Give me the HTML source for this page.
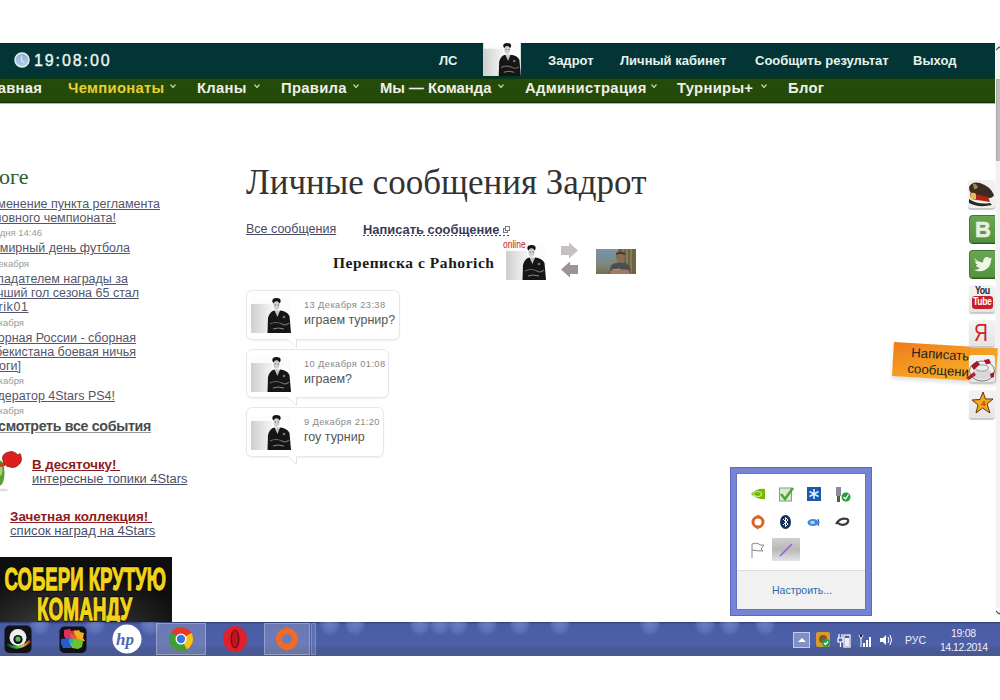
<!DOCTYPE html>
<html><head><meta charset="utf-8">
<style>
*{margin:0;padding:0;box-sizing:border-box}
html,body{width:1000px;height:700px;overflow:hidden;background:#fff;font-family:"Liberation Sans",sans-serif;position:relative}
.a{position:absolute;white-space:pre}
#top{position:absolute;left:0;top:43px;width:995px;height:36px;background:linear-gradient(#02282a 0,#033436 1px,#033436 32px,#063424 33px,#0a381c 35px,#0a381c 36px)}
#nav{position:absolute;left:0;top:79px;width:995px;height:25px;background:linear-gradient(#1e4a1a 0,#254a0a 1px,#244a08 22px,#1e3208 23px,#1e3208 24px,#a8b898 24px)}
.hn{color:#e6f2ec;font-weight:bold;font-size:13px;top:52.5px}
.gn{color:#f0f0e8;font-weight:bold;font-size:14.8px;top:80px;letter-spacing:0.3px}
.ar{position:absolute;top:84px;width:6px;height:4px}
#sb{position:absolute;left:995px;top:43px;width:5px;height:565px;background:#f2f2f2;border-left:1px solid #f8f8f8}
#thumb{position:absolute;left:996px;top:79px;width:4px;height:82px;background:#bdbdbd;border-left:1px solid #a8a8a8}
.sl{color:#555569;font-size:12.5px;text-decoration:underline;text-align:right;line-height:14px}
.sd{color:#9a9a9a;font-size:9.5px;text-align:right;line-height:12px}
#tb{position:absolute;left:0;top:622px;width:1000px;height:34px;background:radial-gradient(ellipse 11px 13px at 40px 1px,rgba(140,160,220,0.5) 0%,rgba(140,160,220,0.3) 65%,rgba(140,160,220,0) 100%),radial-gradient(ellipse 11px 13px at 95px 1px,rgba(140,160,220,0.5) 0%,rgba(140,160,220,0.3) 65%,rgba(140,160,220,0) 100%),radial-gradient(ellipse 11px 13px at 150px 1px,rgba(140,160,220,0.5) 0%,rgba(140,160,220,0.3) 65%,rgba(140,160,220,0) 100%),radial-gradient(ellipse 11px 13px at 330px 1px,rgba(140,160,220,0.5) 0%,rgba(140,160,220,0.3) 65%,rgba(140,160,220,0) 100%),radial-gradient(ellipse 11px 13px at 355px 1px,rgba(140,160,220,0.5) 0%,rgba(140,160,220,0.3) 65%,rgba(140,160,220,0) 100%),radial-gradient(ellipse 11px 13px at 420px 1px,rgba(140,160,220,0.5) 0%,rgba(140,160,220,0.3) 65%,rgba(140,160,220,0) 100%),radial-gradient(ellipse 11px 13px at 440px 1px,rgba(140,160,220,0.5) 0%,rgba(140,160,220,0.3) 65%,rgba(140,160,220,0) 100%),radial-gradient(ellipse 11px 13px at 458px 1px,rgba(140,160,220,0.5) 0%,rgba(140,160,220,0.3) 65%,rgba(140,160,220,0) 100%),radial-gradient(ellipse 11px 13px at 487px 1px,rgba(140,160,220,0.5) 0%,rgba(140,160,220,0.3) 65%,rgba(140,160,220,0) 100%),radial-gradient(ellipse 11px 13px at 520px 1px,rgba(140,160,220,0.5) 0%,rgba(140,160,220,0.3) 65%,rgba(140,160,220,0) 100%),radial-gradient(ellipse 11px 13px at 560px 1px,rgba(140,160,220,0.5) 0%,rgba(140,160,220,0.3) 65%,rgba(140,160,220,0) 100%),radial-gradient(ellipse 11px 13px at 650px 1px,rgba(140,160,220,0.5) 0%,rgba(140,160,220,0.3) 65%,rgba(140,160,220,0) 100%),radial-gradient(ellipse 11px 13px at 705px 1px,rgba(140,160,220,0.5) 0%,rgba(140,160,220,0.3) 65%,rgba(140,160,220,0) 100%),radial-gradient(ellipse 11px 13px at 730px 1px,rgba(140,160,220,0.5) 0%,rgba(140,160,220,0.3) 65%,rgba(140,160,220,0) 100%),radial-gradient(ellipse 11px 13px at 765px 1px,rgba(140,160,220,0.5) 0%,rgba(140,160,220,0.3) 65%,rgba(140,160,220,0) 100%),linear-gradient(#2e3a70 0,#3c4a8c 1px,#4a5ca4 2px,#4d60a8 22px,#4a5a98 26px,#485890 34px)}
</style></head><body>
<svg width="0" height="0" style="position:absolute">
<defs>
<linearGradient id="avbg" x1="0" y1="0" x2="1" y2="0"><stop offset="0" stop-color="#cfcfcf"/><stop offset="1" stop-color="#f4f4f4"/></linearGradient>
<symbol id="av" viewBox="0 0 40 35">
<rect x="0" y="0" width="40" height="35" fill="#fcfcfc"/>
<rect x="0" y="6" width="21" height="29" fill="url(#avbg)"/>
<ellipse cx="25.5" cy="3" rx="4.2" ry="3" fill="#151515"/>
<ellipse cx="25.5" cy="7.5" rx="3" ry="4.3" fill="#d0d0d0"/>
<path d="M23.5 7 H25 M26.5 7 H28" stroke="#555" stroke-width="0.8"/>
<path d="M16.5 35 L17 20 Q18.5 13.5 23.5 12.5 L27 15 L29 12.5 Q36 13 38.5 18 L40 35 Z" fill="#151515"/>
<path d="M23.5 12.5 L26.5 19 L29 12.5 Z" fill="#c4c4c4"/>
<path d="M19 26 Q25 23 31 26 Q35 28 38 25" stroke="#6a6a6a" stroke-width="1.2" fill="none"/>
<path d="M22 31 Q27 29 33 31" stroke="#8a8a8a" stroke-width="1" fill="none"/>
<circle cx="33" cy="19" r="1.3" fill="#777"/>
</symbol>
</defs>
</svg>
<div id="top"></div>
<div id="nav"></div>
<div id="sb"></div><div id="thumb"></div>
<svg class="a" style="left:996px;top:46px" width="4" height="5"><path d="M0 4 L3 1 L4 2" stroke="#555" stroke-width="1.2" fill="none"/></svg>
<svg class="a" style="left:996px;top:610px" width="4" height="5"><path d="M0 1 L3 4 L4 3" stroke="#555" stroke-width="1.2" fill="none"/></svg>

<!-- header -->
<svg class="a" style="left:14px;top:52px" width="16" height="16" viewBox="0 0 16 16"><defs><linearGradient id="clk" x1="0" y1="0" x2="0" y2="1"><stop offset="0" stop-color="#8eaad0"/><stop offset="1" stop-color="#b4d0ee"/></linearGradient></defs><circle cx="8" cy="8" r="7" fill="url(#clk)" stroke="#dff2f0" stroke-width="1.5"/><path d="M7.5 3.5 V8.5 L10.5 11" stroke="#d4e8f8" stroke-width="1.3" fill="none"/></svg>
<div class="a" style="left:34px;top:51.5px;color:#f0f6f0;font-size:16px;letter-spacing:1.9px;-webkit-text-stroke:0.35px #f0f6f0">19:08:00</div>
<div class="a hn" style="left:439px">ЛС</div>
<svg class="a" style="left:482px;top:43px" width="40" height="33" viewBox="0 0 40 33" preserveAspectRatio="none"><use href="#av" width="40" height="33"/></svg>
<div class="a hn" style="left:548px">Задрот</div>
<div class="a hn" style="left:620px">Личный кабинет</div>
<div class="a hn" style="left:755px">Сообщить результат</div>
<div class="a hn" style="left:913px">Выход</div>

<!-- green nav -->
<div class="a gn" style="left:-20px">Главная</div>
<div class="a gn" style="left:68px;color:#e8d030">Чемпионаты</div>
<div class="a gn" style="left:197px">Кланы</div>
<div class="a gn" style="left:281px">Правила</div>
<div class="a gn" style="left:380px;letter-spacing:0">Мы — Команда</div>
<div class="a gn" style="left:525px">Администрация</div>
<div class="a gn" style="left:677px">Турниры+</div>
<div class="a gn" style="left:788px">Блог</div>
<svg class="ar" style="left:170px"><path d="M0.5 0.5 L3 3.5 L5.5 0.5" stroke="#b4d098" stroke-width="1.3" fill="none"/></svg>
<svg class="ar" style="left:254px"><path d="M0.5 0.5 L3 3.5 L5.5 0.5" stroke="#b4d098" stroke-width="1.3" fill="none"/></svg>
<svg class="ar" style="left:353px"><path d="M0.5 0.5 L3 3.5 L5.5 0.5" stroke="#b4d098" stroke-width="1.3" fill="none"/></svg>
<svg class="ar" style="left:498px"><path d="M0.5 0.5 L3 3.5 L5.5 0.5" stroke="#b4d098" stroke-width="1.3" fill="none"/></svg>
<svg class="ar" style="left:651px"><path d="M0.5 0.5 L3 3.5 L5.5 0.5" stroke="#b4d098" stroke-width="1.3" fill="none"/></svg>
<svg class="ar" style="left:761px"><path d="M0.5 0.5 L3 3.5 L5.5 0.5" stroke="#b4d098" stroke-width="1.3" fill="none"/></svg>

<!-- sidebar -->
<div class="a" style="right:971.5px;top:163.5px;font-family:'Liberation Serif',serif;font-size:22px;color:#2a5c30">в блоге</div>
<div class="a sl" style="right:840px;top:197px">Изменение пункта регламента</div>
<div class="a sl" style="right:884px;top:211px">основного чемпионата!</div>
<div class="a sd" style="right:958px;top:227px">Сегодня 14:46</div>
<div class="a sl" style="right:870px;top:241px">Всемирный день футбола</div>
<div class="a sd" style="right:971px;top:258px">10 декабря</div>
<div class="a sl" style="right:872px;top:272px">Обладателем награды за</div>
<div class="a sl" style="right:861px;top:286px">лучший гол сезона 65 стал</div>
<div class="a sl" style="right:971.5px;top:300px;letter-spacing:0.6px">rik01</div>
<div class="a sd" style="right:976px;top:316.5px">10 декабря</div>
<div class="a sl" style="right:864px;top:331px">Сборная России - сборная</div>
<div class="a sl" style="right:864px;top:345px">Узбекистана боевая ничья</div>
<div class="a sl" style="right:979px;top:359px">[итоги]</div>
<div class="a sd" style="right:976px;top:375px">10 декабря</div>
<div class="a sl" style="right:885px;top:389px">Модератор 4Stars PS4!</div>
<div class="a sd" style="right:976px;top:405px">10 декабря</div>
<div class="a" style="right:849px;top:417.5px;font-size:14.2px;letter-spacing:-0.3px;font-weight:bold;color:#4a4a4a;text-decoration:underline;text-decoration-color:#999">Посмотреть все события</div>

<!-- rose -->
<svg class="a" style="left:0;top:445px" width="26" height="50" viewBox="0 0 26 50">
<ellipse cx="0" cy="28" rx="4.5" ry="12.5" fill="#5aa030"/>
<ellipse cx="0" cy="25" rx="2.5" ry="6" fill="#a8d070"/>
<ellipse cx="3" cy="45" rx="5" ry="1.5" fill="#e0e0e0"/>
<path d="M0 18 L5 18 L5 21 L0 22 Z" fill="#c04020"/>
<path d="M2.5 13 Q3 8 9 7 L12 6.5 Q15 7 18 10 L20 8.5 L21 11 Q22.5 16 19.5 19 Q16 23 12 22.5 Q6 22 3.5 18 Z" fill="#dc2020" stroke="#9a1818" stroke-width="0.8"/>
</svg>
<div class="a" style="left:32px;top:457px;font-size:13.3px;font-weight:bold;color:#8e1c1c;text-decoration:underline">В десяточку! </div>
<div class="a" style="left:32px;top:471px;font-size:12.85px;color:#4a5068;text-decoration:underline">интересные топики 4Stars</div>
<div class="a" style="left:10px;top:509px;font-size:13.4px;font-weight:bold;color:#8e1c1c;text-decoration:underline">Зачетная коллекция! </div>
<div class="a" style="left:10px;top:523px;font-size:13.1px;color:#4a5068;text-decoration:underline">список наград на 4Stars</div>

<!-- banner -->
<div class="a" style="left:0;top:557px;width:172px;height:65px;background:radial-gradient(ellipse 120px 60px at 70px 75px,#4a4a4a 0%,#2a2a2a 50%,#0e0e0e 100%);overflow:hidden">
<svg class="a" style="left:0;top:0" width="172" height="65" viewBox="0 0 172 65">
<g font-family="Liberation Sans" font-weight="bold" font-size="32" stroke-linejoin="miter">
<text x="0" y="0" transform="translate(4.5,32.5) scale(0.582,1)" fill="#000" stroke="#000" stroke-width="3">СОБЕРИ КРУТУЮ</text>
<text x="0" y="0" transform="translate(4.5,32.5) scale(0.582,1)" fill="#f2d41a" stroke="#f2d41a" stroke-width="1.3">СОБЕРИ КРУТУЮ</text>
<text x="0" y="0" transform="translate(37,63) scale(0.593,1)" fill="#000" stroke="#000" stroke-width="3">КОМАНДУ</text>
<text x="0" y="0" transform="translate(37,63) scale(0.593,1)" fill="#f2d41a" stroke="#f2d41a" stroke-width="1.3">КОМАНДУ</text>
</g>
</svg>
</div>

<!-- main -->
<div class="a" style="left:246px;top:163px;font-family:'Liberation Serif',serif;font-size:35px;color:#333">Личные сообщения Задрот</div>
<div class="a" style="left:246px;top:222px;font-size:12.5px;color:#4a4a62;text-decoration:underline">Все сообщения</div>
<div class="a" style="left:363px;top:222px;font-size:12.9px;font-weight:bold;color:#3a3a58">Написать сообщение</div>
<div class="a" style="left:363px;top:235px;width:147px;height:1px;background:repeating-linear-gradient(90deg,#444 0 2px,transparent 2px 4px)"></div>
<svg class="a" style="left:503px;top:226px" width="7" height="7"><rect x="0.5" y="2.5" width="4" height="4" fill="none" stroke="#777"/><rect x="2.5" y="0.5" width="4" height="4" fill="#fff" stroke="#777"/></svg>
<div class="a" style="left:333px;top:254px;font-family:'Liberation Serif',serif;font-size:15.5px;font-weight:bold;color:#1a1a1a;letter-spacing:0.55px">Переписка с Pahorich</div>
<svg class="a" style="left:506px;top:245px" width="40" height="35"><use href="#av" width="40" height="35"/></svg>
<div class="a" style="left:503px;top:239px;font-size:10px;color:#c82020;transform:scaleX(0.85);transform-origin:0 0">online</div>
<svg class="a" style="left:560px;top:242px" width="19" height="37" viewBox="0 0 19 37">
<path d="M1 4 L9 4 L9 0.5 L18 8.5 L9 16.5 L9 13 L1 13 Z" fill="#c4c0c4"/>
<path d="M18 23 L10 23 L10 19.5 L1 27.5 L10 35.5 L10 32 L18 32 Z" fill="#9c9498"/>
</svg>
<svg class="a" style="left:596px;top:249px" width="40" height="25" viewBox="0 0 40 25">
<defs><linearGradient id="phl" x1="0" y1="0" x2="0" y2="1"><stop offset="0" stop-color="#7a92ac"/><stop offset="0.6" stop-color="#7c8a80"/><stop offset="1" stop-color="#76704a"/></linearGradient></defs>
<rect width="40" height="25" fill="url(#phl)"/>
<rect x="22" width="18" height="25" fill="#6e6444"/>
<path d="M27 0 V25 M31 0 V25 M35 0 V25" stroke="#8c8260" stroke-width="1.5"/>
<ellipse cx="24.5" cy="8" rx="4.5" ry="6" fill="#8a6c52"/>
<path d="M20 4 Q24 1 29 4 L29 6 Q24 4 20 6 Z" fill="#4a3a2a"/>
<path d="M13 25 L15 17 Q18 13 24 14 Q31 13 34 18 L35 25 Z" fill="#4c4c54"/>
<path d="M14 22 Q22 19 33 21 L34 25 L14 25 Z" fill="#9c7c5c"/>
<path d="M16 21 L24 20" stroke="#c0a070" stroke-width="1.2"/>
</svg>

<!-- bubbles -->
<div class="a" style="left:246px;top:290px;width:154px;height:50px;border:1px solid #e8e8e8;border-radius:6px;background:#fff;box-shadow:0 1px 2px rgba(0,0,0,0.06)"></div>
<div class="a" style="left:246px;top:349px;width:143px;height:49px;border:1px solid #e8e8e8;border-radius:6px;background:#fff;box-shadow:0 1px 2px rgba(0,0,0,0.06)"></div>
<div class="a" style="left:246px;top:407px;width:138px;height:50px;border:1px solid #e8e8e8;border-radius:6px;background:#fff;box-shadow:0 1px 2px rgba(0,0,0,0.06)"></div>
<svg class="a" style="left:286px;top:339px" width="16" height="9"><path d="M2 0.5 L10.5 8.5 L10.5 0.5" fill="#fff" stroke="#e4e4e4"/><rect x="2.5" y="0" width="7.5" height="1" fill="#fff"/></svg>
<svg class="a" style="left:286px;top:397px" width="16" height="9"><path d="M2 0.5 L10.5 8.5 L10.5 0.5" fill="#fff" stroke="#e4e4e4"/><rect x="2.5" y="0" width="7.5" height="1" fill="#fff"/></svg>
<svg class="a" style="left:286px;top:456px" width="16" height="9"><path d="M2 0.5 L10.5 8.5 L10.5 0.5" fill="#fff" stroke="#e4e4e4"/><rect x="2.5" y="0" width="7.5" height="1" fill="#fff"/></svg>
<svg class="a" style="left:251px;top:298px" width="40" height="35"><use href="#av" width="40" height="35"/></svg>
<svg class="a" style="left:251px;top:357px" width="40" height="35"><use href="#av" width="40" height="35"/></svg>
<svg class="a" style="left:251px;top:415px" width="40" height="35"><use href="#av" width="40" height="35"/></svg>
<div class="a" style="left:304px;top:299.5px;font-size:9.3px;color:#888;letter-spacing:0.4px">13 Декабря 23:38</div>
<div class="a" style="left:304px;top:313px;font-size:12.5px;color:#555">играем турнир?</div>
<div class="a" style="left:304px;top:358.5px;font-size:9.3px;color:#888;letter-spacing:0.4px">10 Декабря 01:08</div>
<div class="a" style="left:304px;top:372px;font-size:12.5px;color:#555">играем?</div>
<div class="a" style="left:304px;top:416.5px;font-size:9.3px;color:#888;letter-spacing:0.4px">9 Декабря 21:20</div>
<div class="a" style="left:304px;top:430px;font-size:12.5px;color:#555">гоу турнир</div>

<!-- orange tab -->
<div class="a" style="left:894px;top:341.5px;width:104px;height:34px;background:linear-gradient(160deg,#f07a1a 0%,#f49a22 45%,#f8b828 100%);transform:rotate(3.5deg);transform-origin:0 0;box-shadow:0 3px 4px rgba(0,0,0,0.12)"></div>
<div class="a" style="left:894px;top:341.5px;width:110px;height:34px;font-size:13.2px;color:#222;line-height:16px;padding-top:2px;transform:rotate(3.5deg);transform-origin:0 0;text-align:left"><span style="margin-left:18px">Написать</span>
<span style="margin-left:15px">сообщение</span></div>
<!-- social icons -->
<div class="a" style="left:968px;top:180px;width:27px;height:28px;background:#f0f0f0;border-radius:3px;box-shadow:0 2px 1px #c8c8c8"></div>
<svg class="a" style="left:968px;top:181px" width="27" height="26" viewBox="0 0 27 26">
<path d="M1 6 Q4 0 12 2 Q22 5 26 14 Q24 18 18 17 L6 14 Q1 12 1 6 Z" fill="#3a2c1e"/>
<path d="M5 3 Q8 2 10 6 Q8 9 6 8 Z" fill="#9a8a50"/>
<path d="M2 12 L20 16 L22 21 L3 18 Z" fill="#b82010"/>
<path d="M3 12 Q6 11 8 13 L8 18 L3 18 Z" fill="#e0c050"/>
<path d="M1 18 Q10 24 22 22 L24 24 Q10 27 1 22 Z" fill="#2a2a1a"/>
</svg>
<div class="a" style="left:969px;top:215px;width:26px;height:28px;background:linear-gradient(#68a654,#54923e);border:1px solid #3e7a32;border-radius:4px 0 0 4px;border-right:none;box-shadow:0 1px 0 #2e5a22"></div>
<div class="a" style="left:975px;top:217px;font-size:22px;font-weight:bold;color:#e6f0e0;-webkit-text-stroke:0.6px #e6f0e0">B</div>
<div class="a" style="left:969px;top:250px;width:26px;height:28px;background:linear-gradient(#68a654,#54923e);border:1px solid #3e7a32;border-radius:4px 0 0 4px;border-right:none;box-shadow:0 1px 0 #2e5a22"></div>
<svg class="a" style="left:973px;top:255px" width="20" height="18" viewBox="0 0 20 18"><path d="M1 3 Q5 7 10 7.5 Q10 3 13 2 Q16 1.5 17 3.5 L19 2.5 L18 5 Q18 12 12 15 Q7 17.5 1 15 Q5 15 7 13 Q3 12 3 10 L5 10 Q2 8.5 2 6.5 L4 7 Q1.5 5 1 3 Z" fill="#eef6e8"/></svg>
<div class="a" style="left:969px;top:285px;width:26px;height:27px;background:linear-gradient(#f4f4f4,#e4e4e4);border-radius:3px;box-shadow:0 2px 1px #c8c8c8"></div>
<div class="a" style="left:975px;top:284px;font-size:11px;font-weight:bold;color:#222;transform:scaleX(0.8);transform-origin:0 0;letter-spacing:-0.5px">You</div>
<div class="a" style="left:972px;top:296px;width:21px;height:13px;background:#c8202a;border-radius:3px"></div>
<div class="a" style="left:973px;top:295px;font-size:11.5px;font-weight:bold;color:#fff;transform:scaleX(0.75);transform-origin:0 0;letter-spacing:-0.5px">Tube</div>
<div class="a" style="left:969px;top:320px;width:26px;height:26px;background:linear-gradient(#f4f4f4,#e4e4e4);border-radius:3px;box-shadow:0 2px 1px #c8c8c8"></div>
<div class="a" style="left:974px;top:319px;font-size:24px;color:#d0202a;transform:scaleX(0.8);transform-origin:0 0;font-family:'Liberation Sans',sans-serif">Я</div>
<div class="a" style="left:969px;top:355px;width:26px;height:27px;background:linear-gradient(#f4f4f4,#e4e4e4);border-radius:3px;box-shadow:0 2px 1px #c8c8c8"></div>
<svg class="a" style="left:963px;top:355px" width="32" height="30" viewBox="0 0 32 30">
<ellipse cx="19" cy="16" rx="12.5" ry="10" fill="#f2f2f2" stroke="#7a7a7a" stroke-width="1"/>
<ellipse cx="19" cy="19" rx="10" ry="5.5" fill="#d8d8d8"/>
<ellipse cx="19" cy="13" rx="6.5" ry="3.2" fill="#e8eef0" stroke="#9a9a9a" stroke-width="1"/>
<path d="M8 11 L14 6 L17 9 L11 15 Z" fill="#a81828"/>
<path d="M21 5 L26 4 L28 8 L23 9.5 Z" fill="#a81828"/>
<path d="M3 23 L11 17 L13 20 L6 25 Z" fill="#b02030"/>
<path d="M27 19 L31 17 L31 22 L28 23 Z" fill="#a81828"/>
</svg>
<div class="a" style="left:969px;top:390px;width:26px;height:28px;background:linear-gradient(#f4f4f4,#e4e4e4);border-radius:3px;box-shadow:0 2px 1px #c8c8c8"></div>
<svg class="a" style="left:971px;top:391px" width="24" height="25" viewBox="0 0 24 25"><path d="M12 1 L14.5 8 L22 8 L16 13 L19 22 L11.5 17 L5 22 L7 14 L1 9 L9 8.5 Z" fill="#f4a818" stroke="#5a3a10" stroke-width="1"/><text x="10" y="15" font-size="8" fill="#c04010" font-family="Liberation Sans" font-weight="bold">4</text></svg>

<!-- tray popup -->
<div class="a" style="left:730px;top:467px;width:142px;height:149px;background:#7585d4;border:1px solid #5a6ac0"></div>
<div class="a" style="left:737px;top:474px;width:128px;height:135px;background:#fff;box-shadow:0 0 0 1px #6474c2"></div>
<div class="a" style="left:737px;top:570px;width:128px;height:39px;background:#f1f1f1;border-top:1px solid #dcdcdc"></div>
<div class="a" style="left:772px;top:583.5px;font-size:10.5px;color:#2e6aa8">Настроить...</div>
<svg class="a" style="left:748px;top:484px" width="108" height="80" viewBox="0 0 108 80">
<!-- nvidia -->
<path d="M3 10 Q9 4 17 5 L17 15 Q9 16 3 10 Z" fill="#76b900"/>
<ellipse cx="9.5" cy="10" rx="4" ry="2.5" fill="none" stroke="#c8e890" stroke-width="1.2"/>
<!-- checkbox -->
<rect x="31.5" y="4" width="12" height="13" fill="#d8ecd0" stroke="#8a9a8a"/>
<path d="M33 10 L37 15 L45 4" stroke="#48a830" stroke-width="2.5" fill="none"/>
<!-- snowflake -->
<rect x="59" y="3" width="14" height="14" fill="#1a5aa8"/>
<path d="M66 5 V15 M61.5 7.5 L70.5 12.5 M61.5 12.5 L70.5 7.5" stroke="#dbeeff" stroke-width="1.6"/>
<!-- usb -->
<rect x="88" y="3" width="5" height="9" fill="#8a8a9a"/>
<rect x="89" y="12" width="3" height="6" fill="#555"/>
<circle cx="98" cy="13" r="4.5" fill="#2a9a3a"/>
<path d="M95.5 13 L97.5 15 L100.5 10.5" stroke="#fff" stroke-width="1.3" fill="none"/>
<!-- origin -->
<circle cx="10" cy="38" r="5" fill="none" stroke="#e06028" stroke-width="3"/>
<path d="M10 31 L11 33 M10 45 L9 43" stroke="#e06028" stroke-width="2"/>
<!-- bluetooth -->
<ellipse cx="37.5" cy="38" rx="5.5" ry="7" fill="#14305a"/>
<path d="M35 35 L40 40 L37.5 42.5 V33.5 L40 36 L35 41" stroke="#fff" stroke-width="1" fill="none"/>
<!-- battery oval -->
<ellipse cx="65" cy="38.5" rx="5.5" ry="3.5" fill="#3a8ae0"/>
<ellipse cx="64.5" cy="38.5" rx="2.5" ry="1.8" fill="#a8d0f8"/>
<path d="M70 35 Q72 38.5 70 42" stroke="#2a4a80" fill="none"/>
<!-- swirl -->
<path d="M88 40 Q92 33 99 35 Q102 37 98 40 Q93 42 90 39" stroke="#3a3a3a" stroke-width="2.2" fill="none"/>
<!-- flag -->
<path d="M4 60 V74 M4 60 Q10 58 12 61 L16 61 L13 65 L15 67 Q9 67 4 66" stroke="#888" stroke-width="1" fill="#fafafa"/>
<!-- highlighted -->
<rect x="24" y="54" width="28" height="23" fill="url(#hl)"/>
<path d="M32 72 L44 60" stroke="#9a60d0" stroke-width="1.6"/>
<defs><linearGradient id="hl" x1="0" y1="0" x2="0" y2="1"><stop offset="0" stop-color="#d0d0d0"/><stop offset="0.5" stop-color="#b8b8b8"/><stop offset="1" stop-color="#e4e4e8"/></linearGradient></defs>
</svg>

<!-- taskbar -->
<div id="tb"></div>
<div class="a" style="left:156px;top:623px;width:50px;height:32px;background:rgba(255,255,255,0.18);border:1px solid rgba(255,255,255,0.28)"></div>
<div class="a" style="left:264px;top:623px;width:46px;height:32px;background:rgba(255,255,255,0.18);border:1px solid rgba(255,255,255,0.28)"></div>
<div class="a" style="left:311px;top:623px;width:5px;height:32px;background:rgba(255,255,255,0.12);border:1px solid rgba(255,255,255,0.2)"></div>
<svg class="a" style="left:0;top:622px" width="320" height="34" viewBox="0 0 320 34">
<!-- cam -->
<defs><linearGradient id="arc" x1="0" y1="0" x2="1" y2="0"><stop offset="0" stop-color="#1a3a30"/><stop offset="0.45" stop-color="#40c040"/><stop offset="0.7" stop-color="#e0c040"/><stop offset="1" stop-color="#c03020"/></linearGradient></defs>
<rect x="4.5" y="3.5" width="27" height="27.5" rx="5" fill="#101216"/>
<path d="M7 22 Q18 30 30 19" stroke="url(#arc)" stroke-width="2.5" fill="none"/>
<circle cx="18" cy="15.5" r="8.5" fill="#eeeeee"/>
<circle cx="18" cy="17.5" r="4.6" fill="#0a140a"/>
<circle cx="18" cy="17" r="2.6" fill="#5cb85c"/>
<!-- puzzle -->
<rect x="59.5" y="4.5" width="27" height="26.5" rx="5" fill="#101216"/>
<path d="M64 8 L70 7 L71 9 L76 8 L77 13 L75 15 L76 17 L66 17 L64 14 Z" fill="#e0305a"/>
<path d="M74 9 L79 8 L80 10 L84 11 L83 16 L85 19 L77 20 L75 16 Z" fill="#f0b020"/>
<path d="M70 12 L76 13 L77 17 L72 18 Z" fill="#f05a20"/>
<path d="M61 17 L70 16 L72 21 L71 26 L63 26 L61 22 Z" fill="#2a5ad0"/>
<path d="M70 17 L80 17 L83 20 L82 25 L78 27 L72 26 L70 22 Z" fill="#70c030"/>
<path d="M69 17 L73 16 L73 21 L69 21 Z" fill="#20b0a0"/>
<!-- hp -->
<circle cx="127" cy="17" r="14.5" fill="#fff"/>
<text x="116" y="23" font-size="17" font-style="italic" font-weight="bold" fill="#4a6ab0" font-family="Liberation Serif">hp</text>
<!-- chrome -->
<circle cx="181" cy="17" r="12" fill="#e03a2e"/>
<path d="M181 17 L170.6 23 A12 12 0 0 0 187 27.4 Z" fill="#3aa03a"/>
<path d="M181 17 L170.6 23 A12 12 0 0 1 171 10 Z" fill="#3aa03a"/>
<path d="M181 17 L191.4 11 A12 12 0 0 1 187 27.4 Z" fill="#f4c418"/>
<circle cx="181" cy="17" r="5.5" fill="#fff"/>
<circle cx="181" cy="17" r="4.2" fill="#3a78d8"/>
<!-- opera -->
<ellipse cx="235" cy="17" rx="12" ry="13" fill="#e0202c"/>
<ellipse cx="235" cy="17" rx="4.5" ry="9.5" fill="#7a0a12"/>
<ellipse cx="235" cy="17" rx="3" ry="8.5" fill="#c01420"/>
<!-- origin -->
<circle cx="287" cy="17" r="8" fill="none" stroke="#f06a28" stroke-width="6"/>
<path d="M287 4 L289 8 L285 8 Z M287 30 L285 26 L289 26 Z" fill="#f06a28"/>
</svg>
<!-- tray -->
<div class="a" style="left:793px;top:632px;width:17px;height:16px;background:rgba(255,255,255,0.3);border:1px solid rgba(255,255,255,0.55)"></div>
<svg class="a" style="left:796px;top:636px" width="12" height="8"><path d="M2 6 L6 2 L10 6 Z" fill="#fff"/></svg>
<svg class="a" style="left:814px;top:631px" width="80" height="18" viewBox="0 0 80 18">
<rect x="2" y="1" width="14" height="15" rx="2" fill="#d89a30"/>
<circle cx="9" cy="8" r="4" fill="#7a5a20"/>
<circle cx="12" cy="12" r="4" fill="#28a048"/>
<path d="M10 12 L11.5 13.5 L14 10.5" stroke="#fff" stroke-width="1.2" fill="none"/>
<path d="M25 3 V7 M28 3 V7 M24 7 H29 V11 H24 Z M26.5 11 V16" stroke="#fff" stroke-width="1.2" fill="none"/>
<rect x="30" y="4" width="6" height="12" fill="none" stroke="#fff" stroke-width="1.2"/>
<rect x="31" y="7" width="4" height="8" fill="#eee"/>
<path d="M45 4 L47 8 L49 4 M47 8 V16" stroke="#fff" stroke-width="1"/>
<rect x="49" y="12" width="2" height="4" fill="#fff"/><rect x="52" y="9" width="2" height="7" fill="#fff"/><rect x="55" y="6" width="2" height="10" fill="#fff"/>
<path d="M66 7 H69 L72 4 V14 L69 11 H66 Z" fill="#fff"/>
<path d="M74 6 Q76 9 74 12 M76 4 Q79 9 76 14" stroke="#fff" stroke-width="1" fill="none"/>
</svg>
<div class="a" style="left:905px;top:634px;font-size:10.5px;color:#f0f0f8">РУС</div>
<div class="a" style="left:951px;top:627px;font-size:10.5px;color:#f0f0f8;letter-spacing:-0.3px">19:08</div>
<div class="a" style="left:940px;top:641px;font-size:10.5px;color:#f0f0f8;letter-spacing:-0.5px">14.12.2014</div>

</body></html>
